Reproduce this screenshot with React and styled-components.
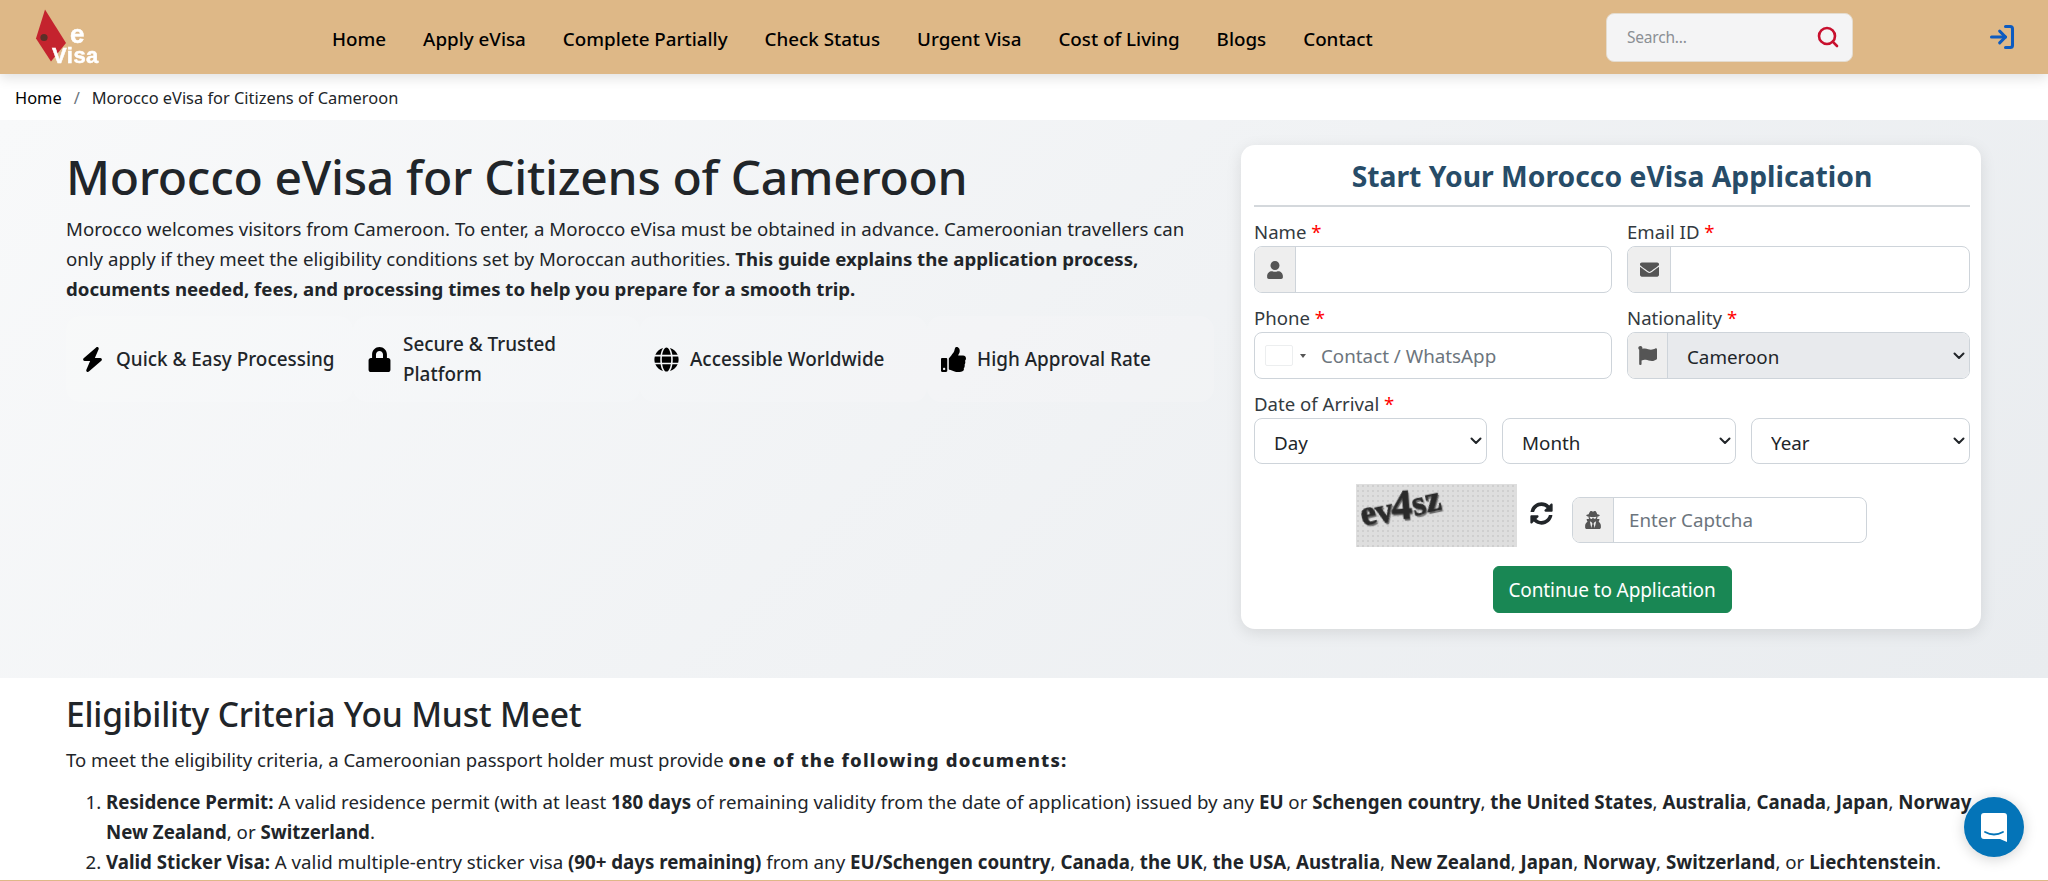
import styled, { createGlobalStyle } from "styled-components";
import { FaLock, FaGlobe, FaThumbsUp, FaUser, FaEnvelope, FaFlag, FaSyncAlt, FaUserSecret } from "react-icons/fa";
import { FaBolt } from "react-icons/fa6";
import { LogIn, Search } from "lucide-react";

const FONT = `"Noto Sans", "Open Sans", Arial, sans-serif`;
const CHEVRON = `url("data:image/svg+xml,%3csvg xmlns='http://www.w3.org/2000/svg' viewBox='0 0 12 8'%3e%3cpath fill='none' stroke='%23212529' stroke-width='2' stroke-linecap='round' stroke-linejoin='round' d='M1.5 1.5 6 6l4.5-4.5'/%3e%3c/svg%3e")`;

const GlobalStyle = createGlobalStyle`
  * { box-sizing: border-box; }
  html, body { margin: 0; padding: 0; height: 881px; overflow: hidden; background: #fff; }
  body { font-family: ${FONT}; color: #212529; }
`;

const Page = styled.div`
  height: 881px;
  display: flex;
  flex-direction: column;
  overflow: hidden;
`;

const Navbar = styled.header`
  flex: none;
  height: 74px;
  background: #deb887;
  box-shadow: 0 4px 12px rgba(0, 0, 0, 0.12);
  display: flex;
  align-items: center;
  padding: 0 32px 0 35px;
  position: relative;
  z-index: 2;
`;

const LogoBox = styled.svg`
  flex: none;
  width: 66px;
  height: 56px;
  margin-right: 231px;
  overflow: visible;
  text {
    font-family: "Liberation Sans", Arial, sans-serif;
    font-weight: 700;
    fill: #fff;
    stroke: #fff;
    stroke-width: 0.5px;
    filter: blur(0.4px);
  }
`;

const NavList = styled.nav`
  display: flex;
  gap: 37px;
  flex: 1;
  padding-top: 3px;
`;

const NavLink = styled.a`
  font-size: 18.8px;
  font-weight: 500;
  color: #000;
`;

const SearchBox = styled.div`
  flex: none;
  width: 247px;
  height: 49px;
  margin-right: 135px;
  background: #f4f4f5;
  border: 1px solid #e4dccf;
  border-radius: 8px;
  display: flex;
  align-items: center;
  justify-content: space-between;
  padding: 0 12px 0 20px;
  color: #c8102e;
`;

const SearchText = styled.span`
  font-size: 15.5px;
  color: #8b8f94;
  letter-spacing: -0.2px;
`;

const Crumbs = styled.div`
  flex: none;
  height: 46px;
  display: flex;
  align-items: center;
  gap: 12px;
  padding: 1px 0 0 15px;
  font-size: 16.4px;
  color: #212529;
`;

const CrumbLink = styled.a`
  color: #000;
`;

const CrumbSep = styled.span`
  color: #6c757d;
`;

const Hero = styled.section`
  flex: none;
  height: 558px;
  background: linear-gradient(135deg, #f8f9fa 0%, #e9ecef 100%);
  display: flex;
  justify-content: space-between;
  padding: 25px 67px 0 66px;
`;

const HeroLeft = styled.div`
  width: 1148px;
`;

const Title = styled.h1`
  margin: 0 0 5px;
  font-size: 48px;
  line-height: 64px;
  font-weight: 500;
  letter-spacing: -0.3px;
`;

const Lead = styled.p`
  margin: 0;
  font-size: 18.65px;
  line-height: 30px;
`;

const FeatureRow = styled.div`
  display: grid;
  grid-template-columns: repeat(4, 287px);
  margin-top: 12px;
`;

const Feature = styled.div`
  height: 86px;
  display: flex;
  align-items: center;
  gap: 11px;
  padding: 0 14px;
  border-radius: 14px;
  font-size: 18.9px;
  line-height: 30px;
  font-weight: 500;
  background: rgba(255, 255, 255, 0.14);
  svg { flex: none; font-size: 25px; color: #000; }
`;

const FormCard = styled.form`
  width: 740px;
  height: 484px;
  background: #fff;
  border-radius: 14px;
  box-shadow: 0 4px 16px rgba(0, 0, 0, 0.1);
  padding: 12px 11px 0 13px;
`;

const FormTitle = styled.h2`
  margin: 0 0 12px;
  padding-bottom: 10px;
  border-bottom: 2px solid #d4d8dc;
  text-align: center;
  font-size: 28.3px;
  line-height: 38px;
  font-weight: 700;
  color: #274c68;
`;

const FormGrid = styled.div`
  display: grid;
  grid-template-columns: 358px 343px;
  column-gap: 15px;
`;

const Field = styled.div`
  height: 86px;
`;

const Label = styled.label`
  display: block;
  height: 27px;
  font-size: 18.6px;
  line-height: 25px;
  color: #333a40;
  b { color: #f00; font-weight: 400; }
`;

const InputGroup = styled.div`
  display: flex;
  flex: none;
  height: ${(p) => p.$h || 47}px;
  width: ${(p) => (p.$w ? `${p.$w}px` : "auto")};
  margin-top: ${(p) => p.$top || 0}px;
  border: 1px solid #ced4da;
  border-radius: 8px;
  overflow: hidden;
  background: #fff;
`;

const Addon = styled.span`
  flex: none;
  width: ${(p) => p.$w || 41}px;
  display: flex;
  align-items: center;
  justify-content: center;
  background: #eeeeee;
  border-right: 1px solid #ced4da;
  color: #555;
  font-size: ${(p) => p.$size || 18}px;
`;

const TextInput = styled.input`
  flex: 1;
  min-width: 0;
  border: 0;
  outline: 0;
  background: transparent;
  padding: 0 15px;
  font-family: ${FONT};
  font-size: 18.8px;
  &::placeholder { color: #6c757d; opacity: 1; }
`;

const FlagPicker = styled.span`
  flex: none;
  display: flex;
  align-items: center;
  gap: 7px;
  padding-left: 10px;
  &::before {
    content: "";
    width: 26px;
    height: 19px;
    background: #fff;
    border: 1px solid #eceeef;
    border-radius: 2px;
  }
  &::after {
    content: "";
    border-left: 3px solid transparent;
    border-right: 3px solid transparent;
    border-top: 4px solid #555;
  }
`;

const NationSelect = styled.select`
  flex: 1;
  min-width: 0;
  border: 0;
  outline: 0;
  appearance: none;
  background: #e8eaed ${CHEVRON} no-repeat right 4px center / 12px 8px;
  padding: 2px 20px 0 19px;
  font-family: ${FONT};
  font-size: 18.8px;
  color: #212529;
`;

const DateRow = styled.div`
  display: grid;
  grid-template-columns: 233px 234px 219px;
  column-gap: 15px;
`;

const DateSelect = styled.select`
  height: 46px;
  min-width: 0;
  border: 1px solid #ced4da;
  border-radius: 8px;
  outline: 0;
  appearance: none;
  background: #fff ${CHEVRON} no-repeat right 4px center / 12px 8px;
  padding: 3px 20px 0 19px;
  font-family: ${FONT};
  font-size: 18.8px;
  color: #212529;
`;

const CaptchaRow = styled.div`
  display: flex;
  align-items: flex-start;
  margin-top: 20px;
  padding-left: 102px;
  height: 63px;
`;

const CaptchaImage = styled.div`
  flex: none;
  width: 161px;
  height: 63px;
  background-color: #dedede;
  background-image: radial-gradient(circle at 2px 2px, #cfcfcf 1.1px, transparent 1.5px);
  background-size: 5px 5px;
  display: flex;
  align-items: flex-start;
  padding: 6px 0 0 2px;
`;

const CaptchaChar = styled.span`
  font-family: "Liberation Serif", serif;
  font-weight: 700;
  font-size: ${(p) => p.$size}px;
  line-height: 30px;
  color: #2a2a2a;
  -webkit-text-stroke: 0.7px #2a2a2a;
  text-shadow: 1px 2px 1px #666;
  filter: blur(0.5px);
  transform: rotate(${(p) => p.$rot}deg) translateY(${(p) => p.$y}px);
  display: inline-block;
`;

const RefreshBtn = styled.span`
  flex: none;
  width: 55px;
  padding: 18px 7px 0 0;
  display: flex;
  justify-content: center;
  font-size: 23px;
  line-height: 1;
  color: #212529;
`;

const SubmitWrap = styled.div`
  display: flex;
  justify-content: center;
  margin-top: 19px;
`;

const SubmitBtn = styled.button`
  width: 239px;
  height: 47px;
  background: #198754;
  border: 1px solid #198754;
  border-radius: 6px;
  color: #fff;
  font-family: ${FONT};
  font-size: 19px;
  letter-spacing: -0.1px;
`;

const Content = styled.section`
  flex: 1;
  min-height: 0;
  overflow: hidden;
  padding: 12px 66px 0;
`;

const SectionTitle = styled.h2`
  margin: 0 0 7px;
  font-size: 33.6px;
  line-height: 48px;
  font-weight: 500;
  letter-spacing: -0.2px;
`;

const Para = styled.p`
  margin: 0 0 12px;
  font-size: 18.55px;
  line-height: 30px;
  strong { font-weight: 800; letter-spacing: 1.15px; }
`;

const OrderedList = styled.ol`
  margin: 0;
  padding-left: 40px;
  font-size: 18.7px;
  line-height: 30px;
`;

const BottomRule = styled.div`
  flex: none;
  height: 1px;
  background: #deb887;
`;

const ChatBubble = styled.button`
  position: fixed;
  left: 1964px;
  top: 797px;
  width: 60px;
  height: 60px;
  padding: 0;
  border: 0;
  border-radius: 50%;
  background: #0474b8;
  box-shadow: 0 2px 14px rgba(0, 0, 0, 0.18);
  display: flex;
  align-items: center;
  justify-content: center;
`;

const features = [
  { icon: <FaBolt />, text: "Quick & Easy Processing" },
  { icon: <FaLock />, text: "Secure & Trusted Platform" },
  { icon: <FaGlobe />, text: "Accessible Worldwide" },
  { icon: <FaThumbsUp />, text: "High Approval Rate" },
];

const navItems = ["Home", "Apply eVisa", "Complete Partially", "Check Status", "Urgent Visa", "Cost of Living", "Blogs", "Contact"];

const captcha = [
  { c: "e", size: 35, rot: -14, y: 9 },
  { c: "v", size: 35, rot: -12, y: 7 },
  { c: "4", size: 42, rot: -4, y: 0 },
  { c: "s", size: 35, rot: -14, y: -1 },
  { c: "z", size: 35, rot: -12, y: -5 },
];

function Logo() {
  return (
    <LogoBox viewBox="0 0 66 56">
      <path d="M10 0.5 L31 34 L16 52.5 L1 29.5 Z" fill="#c4232e" />
      <circle cx="9" cy="28.5" r="3.6" fill="#5a2f28" />
      <text x="35" y="33.5" fontSize="26">e</text>
      <text x="17" y="53.5" fontSize="22" letterSpacing="0.5">Visa</text>
    </LogoBox>
  );
}

export default function App() {
  return (
    <Page>
      <GlobalStyle />
      <Navbar>
        <Logo />
        <NavList>
          {navItems.map((item) => (
            <NavLink key={item}>{item}</NavLink>
          ))}
        </NavList>
        <SearchBox>
          <SearchText>Search...</SearchText>
          <Search size={24} strokeWidth={2.6} />
        </SearchBox>
        <LogIn size={28} strokeWidth={2.6} color="#0d5bc0" />
      </Navbar>
      <Crumbs>
        <CrumbLink>Home</CrumbLink>
        <CrumbSep>/</CrumbSep>
        <span>Morocco eVisa for Citizens of Cameroon</span>
      </Crumbs>
      <Hero>
        <HeroLeft>
          <Title>Morocco eVisa for Citizens of Cameroon</Title>
          <Lead>
            Morocco welcomes visitors from Cameroon. To enter, a Morocco eVisa must be obtained in advance. Cameroonian travellers can only apply if they meet the eligibility conditions set by Moroccan authorities. <strong>This guide explains the application process, documents needed, fees, and processing times to help you prepare for a smooth trip.</strong>
          </Lead>
          <FeatureRow>
            {features.map((f) => (
              <Feature key={f.text}>
                {f.icon}
                <span>{f.text}</span>
              </Feature>
            ))}
          </FeatureRow>
        </HeroLeft>
        <FormCard>
          <FormTitle>Start Your Morocco eVisa Application</FormTitle>
          <FormGrid>
            <Field>
              <Label>Name <b>*</b></Label>
              <InputGroup>
                <Addon><FaUser /></Addon>
                <TextInput />
              </InputGroup>
            </Field>
            <Field>
              <Label>Email ID <b>*</b></Label>
              <InputGroup>
                <Addon $w={43} $size={19}><FaEnvelope /></Addon>
                <TextInput />
              </InputGroup>
            </Field>
            <Field>
              <Label>Phone <b>*</b></Label>
              <InputGroup>
                <FlagPicker />
                <TextInput placeholder="Contact / WhatsApp" />
              </InputGroup>
            </Field>
            <Field>
              <Label>Nationality <b>*</b></Label>
              <InputGroup>
                <Addon $w={40} $size={19}><FaFlag /></Addon>
                <NationSelect defaultValue="Cameroon">
                  <option>Cameroon</option>
                </NationSelect>
              </InputGroup>
            </Field>
          </FormGrid>
          <Label>Date of Arrival <b>*</b></Label>
          <DateRow>
            <DateSelect><option>Day</option></DateSelect>
            <DateSelect><option>Month</option></DateSelect>
            <DateSelect><option>Year</option></DateSelect>
          </DateRow>
          <CaptchaRow>
            <CaptchaImage>
              {captcha.map((ch) => (
                <CaptchaChar key={ch.c} $size={ch.size} $rot={ch.rot} $y={ch.y}>{ch.c}</CaptchaChar>
              ))}
            </CaptchaImage>
            <RefreshBtn><FaSyncAlt /></RefreshBtn>
            <InputGroup $h={46} $w={295} $top={13}>
              <Addon><FaUserSecret /></Addon>
              <TextInput placeholder="Enter Captcha" />
            </InputGroup>
          </CaptchaRow>
          <SubmitWrap>
            <SubmitBtn type="button">Continue to Application</SubmitBtn>
          </SubmitWrap>
        </FormCard>
      </Hero>
      <Content>
        <SectionTitle>Eligibility Criteria You Must Meet</SectionTitle>
        <Para>
          To meet the eligibility criteria, a Cameroonian passport holder must provide <strong>one of the following documents:</strong>
        </Para>
        <OrderedList>
          <li>
            <strong>Residence Permit:</strong> A valid residence permit (with at least <strong>180 days</strong> of remaining validity from the date of application) issued by any <strong>EU</strong> or <strong>Schengen country</strong>, <strong>the United States</strong>, <strong>Australia</strong>, <strong>Canada</strong>, <strong>Japan</strong>, <strong>Norway</strong>, <strong>New Zealand</strong>, or <strong>Switzerland</strong>.
          </li>
          <li>
            <strong>Valid Sticker Visa:</strong> A valid multiple-entry sticker visa <strong>(90+ days remaining)</strong> from any <strong>EU/Schengen country</strong>, <strong>Canada</strong>, <strong>the UK</strong>, <strong>the USA</strong>, <strong>Australia</strong>, <strong>New Zealand</strong>, <strong>Japan</strong>, <strong>Norway</strong>, <strong>Switzerland</strong>, or <strong>Liechtenstein</strong>.
          </li>
        </OrderedList>
      </Content>
      <BottomRule />
      <ChatBubble aria-label="Chat">
        <svg width="26" height="29" viewBox="0 0 26 29">
          <path d="M3 0 H23 a3 3 0 0 1 3 3 V29 L19 26 H3 a3 3 0 0 1 -3 -3 V3 a3 3 0 0 1 3 -3z" fill="#fff" />
          <path d="M4 19 q9 5 18 0" fill="none" stroke="#0474b8" strokeWidth="1.8" strokeLinecap="round" />
        </svg>
      </ChatBubble>
    </Page>
  );
}
